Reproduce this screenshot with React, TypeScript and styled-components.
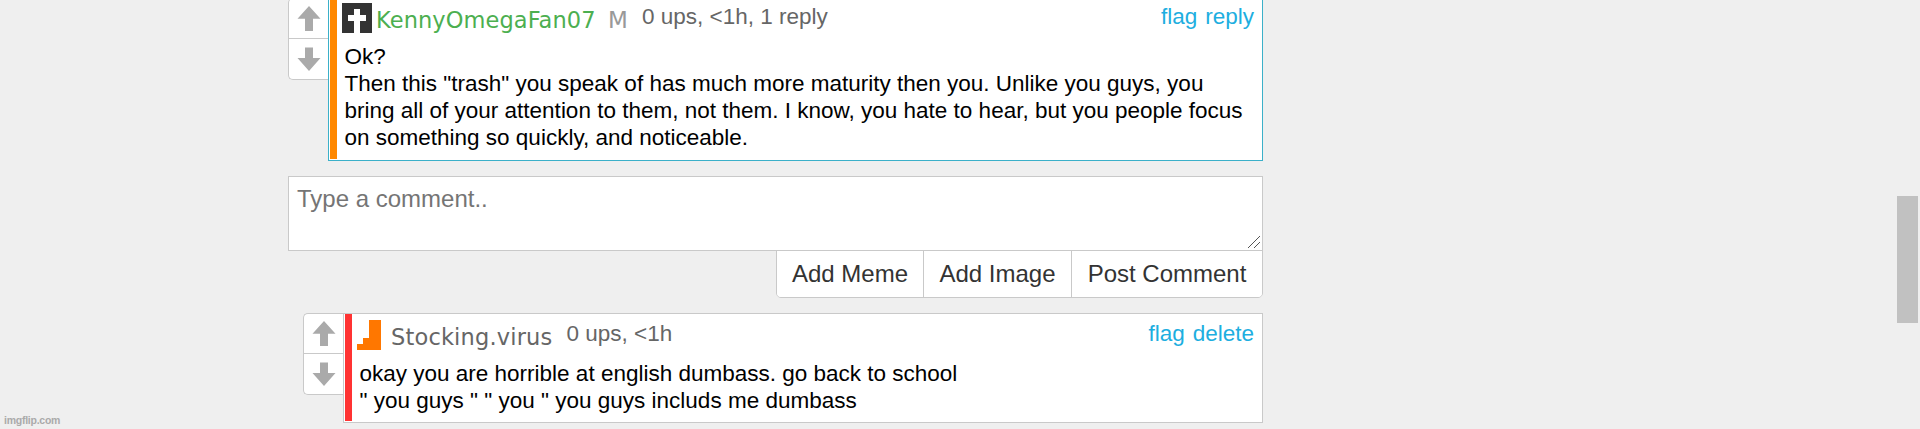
import styled, { createGlobalStyle } from "styled-components";

const GlobalStyle = createGlobalStyle`
  * {
    box-sizing: border-box;
  }
  body {
    margin: 0;
    overflow: hidden;
    background: #efefef;
    font-family: "Liberation Sans", Arial, sans-serif;
  }
`;

const Page = styled.div`
  position: relative;
  height: 429px;
  overflow: hidden;
  background: #efefef;
`;
const Thread = styled.main`
  display: flow-root;
  width: 975px;
  margin-left: 288px;
`;
const CommentRow = styled.article<{ $indent?: number; $top: number }>`
  display: flex;
  align-items: flex-start;
  margin-top: ${({ $top }) => $top}px;
  margin-left: ${({ $indent = 0 }) => $indent}px;
`;
const Votes = styled.div<{ $offset: number }>`
  width: 40px;
  height: 82px;
  display: flex;
  flex-direction: column;
  margin-top: ${({ $offset }) => $offset}px;
  background: #fff;
  border: 1px solid #c9c9c9;
  border-right: none;
  border-radius: 5px 0 0 5px;
`;
const VoteButton = styled.button`
  height: 39px;
  display: flex;
  align-items: center;
  justify-content: center;
  padding: 0 0 0 1px;
  border: none;
  background: none;
  cursor: pointer;

  & + & {
    height: 41px;
    border-top: 1px solid #c9c9c9;
  }
`;
const CommentBox = styled.section<{ $border: string; $height: number }>`
  flex: 1;
  display: flex;
  height: ${({ $height }) => $height}px;
  padding: 0 0 1px 1px;
  background: #fff;
  border: 1px solid ${({ $border }) => $border};
`;
const Stripe = styled.div<{ $color: string }>`
  width: 7px;
  background: ${({ $color }) => $color};
`;
const Content = styled.div`
  flex: 1;
  padding: 6px 8px 0 5px;
`;
const Header = styled.header`
  display: flex;
  height: 40px;
`;
const Avatar = styled.svg`
  flex: none;
  width: 30px;
  height: 30px;
  margin-right: 4px;
`;
const Username = styled.a<{ $color: string; $width: number; $spacing: number }>`
  width: ${({ $width }) => $width}px;
  padding-top: 4px;
  color: ${({ $color }) => $color};
  font: 22.5px/26px "DejaVu Sans", Verdana, sans-serif;
  letter-spacing: ${({ $spacing }) => $spacing}px;
  white-space: nowrap;
`;
const Badge = styled.span`
  width: 34px;
  padding-top: 4px;
  color: #999;
  font: 23px/26px "DejaVu Sans", Verdana, sans-serif;
`;
const Meta = styled.span`
  color: #666;
  font-size: 22.5px;
  line-height: 28px;
`;
const Links = styled.nav`
  display: flex;
  gap: 8px;
  margin-left: auto;
`;
const Link = styled.a`
  color: #1daee0;
  font-size: 22.5px;
  line-height: 28px;
  cursor: pointer;
`;
const Body = styled.p`
  margin: 0;
  padding-left: 2.5px;
  color: #000;
  font-size: 22.5px;
  line-height: 27px;
  white-space: pre;
`;
const InputWrapper = styled.div`
  position: relative;
  margin-top: 15px;
`;
const CommentInput = styled.textarea`
  display: block;
  width: 975px;
  height: 75px;
  margin: 0;
  padding: 8px;
  border: 1px solid #c9c9c9;
  border-radius: 0;
  outline: none;
  overflow: hidden;
  resize: none;
  background: #fff;
  font: 24px/28px "Liberation Sans", Arial, sans-serif;

  &::placeholder {
    color: #757575;
  }
`;
const ResizeGrip = styled.svg`
  position: absolute;
  right: 3px;
  bottom: 3px;
  width: 12px;
  height: 12px;
  pointer-events: none;
`;
const Actions = styled.div`
  display: flex;
  width: 487px;
  height: 48px;
  margin: -1px 0 0 auto;
  border: 1px solid #c9c9c9;
  border-radius: 0 0 5px 5px;
  overflow: hidden;
`;
const ActionButton = styled.button<{ $width: number }>`
  width: ${({ $width }) => $width}px;
  padding: 0;
  border: none;
  background: #fff;
  color: #333;
  font: 24px/28px "Liberation Sans", Arial, sans-serif;
  white-space: nowrap;
  cursor: pointer;

  & + & {
    border-left: 1px solid #c9c9c9;
  }
`;
const ScrollThumb = styled.div`
  position: absolute;
  top: 196px;
  right: 2px;
  width: 21px;
  height: 127px;
  background: #c1c1c1;
`;
const Watermark = styled.div`
  position: absolute;
  left: 4px;
  bottom: 2px;
  color: #aaa;
  font: bold 10.5px/14px "Liberation Sans", Arial, sans-serif;
  letter-spacing: -0.25px;
`;

const VoteControls = ({ $offset = 0 }: { $offset?: number }) => (
  <Votes $offset={$offset}>
    <VoteButton aria-label="upvote">
      <svg width="24" height="25" viewBox="0 0 24 25">
        <path d="M12 0 23.5 12.7H16V25H8V12.7H.5Z" fill="#aaa" />
      </svg>
    </VoteButton>
    <VoteButton aria-label="downvote">
      <svg width="24" height="25" viewBox="0 0 24 25">
        <path d="M8 .5H16V11H23.5L12 24 .5 11H8Z" fill="#aaa" />
      </svg>
    </VoteButton>
  </Votes>
);

const App = () => (
  <>
    <GlobalStyle />
    <Page>
      <Thread>
        <CommentRow $top={-4}>
          <VoteControls $offset={2} />
          <CommentBox $border="#3bb0c9" $height={165}>
            <Stripe $color="#ff8800" />
            <Content>
              <Header>
                <Avatar viewBox="0 0 30 30">
                  <path d="M0 0H30V30H0Z" fill="#333" />
                  <path d="M12 6H18V12H24V18H18V30H12V18H6V12H12Z" fill="#fff" />
                </Avatar>
                <Username $color="#4caf50" $width={232} $spacing={0.08}>
                  KennyOmegaFan07
                </Username>
                <Badge>M</Badge>
                <Meta>0 ups, &lt;1h, 1 reply</Meta>
                <Links>
                  <Link>flag</Link>
                  <Link>reply</Link>
                </Links>
              </Header>
              <Body>
                {`Ok?
Then this "trash" you speak of has much more maturity then you. Unlike you guys, you
bring all of your attention to them, not them. I know, you hate to hear, but you people focus
on something so quickly, and noticeable.`}
              </Body>
            </Content>
          </CommentBox>
        </CommentRow>
        <InputWrapper>
          <CommentInput placeholder="Type a comment.." />
          <ResizeGrip viewBox="0 0 12 12">
            <path d="M0 12 12 0M6 12 12 6" stroke="#555" strokeWidth="1" />
          </ResizeGrip>
        </InputWrapper>
        <Actions>
          <ActionButton $width={146}>Add Meme</ActionButton>
          <ActionButton $width={148}>Add Image</ActionButton>
          <ActionButton $width={191}>Post Comment</ActionButton>
        </Actions>
        <CommentRow $top={15} $indent={15}>
          <VoteControls />
          <CommentBox $border="#c9c9c9" $height={110}>
            <Stripe $color="#ff3333" />
            <Content>
              <Header>
                <Avatar viewBox="0 0 30 30">
                  <path d="M12 0H24V30H0V24H6V18H12Z" fill="#ff7700" />
                </Avatar>
                <Username $color="#666" $width={175.5} $spacing={0.17}>
                  Stocking.virus
                </Username>
                <Meta>0 ups, &lt;1h</Meta>
                <Links>
                  <Link>flag</Link>
                  <Link>delete</Link>
                </Links>
              </Header>
              <Body>
                {`okay you are horrible at english dumbass. go back to school
" you guys " " you " you guys includs me dumbass`}
              </Body>
            </Content>
          </CommentBox>
        </CommentRow>
      </Thread>
      <ScrollThumb />
      <Watermark>imgflip.com</Watermark>
    </Page>
  </>
);

export default App;
